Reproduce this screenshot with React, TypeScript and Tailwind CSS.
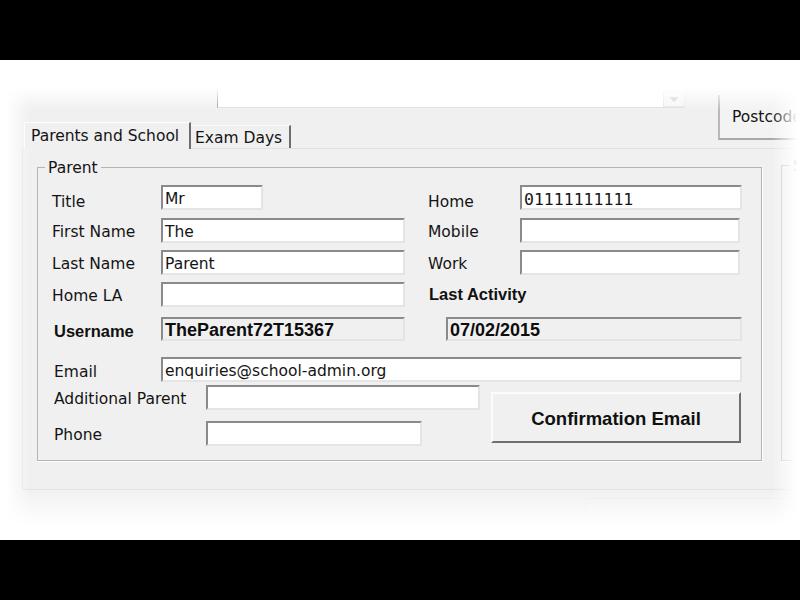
import React from 'react';
import { clsx } from 'clsx';

// winforms-ish look, blown up ~1.5x
const ui = "font-['DejaVu_Sans',sans-serif] text-[15.5px] leading-none text-[#141414] whitespace-nowrap";
const boldUi = "font-['Liberation_Sans',Arial,sans-serif] font-bold text-[16.5px] leading-none text-[#111] whitespace-nowrap";
const sunken = 'border-2 border-t-[#8a8a8a] border-l-[#8a8a8a] border-r-[#e4e4e4] border-b-[#e4e4e4]';

type FieldProps = {
  value?: string;
  width: string;
  readOnly?: boolean;
  variant?: 'plain' | 'mono' | 'bold';
  height?: string;
};

function Field({ value, width, readOnly = false, variant = 'plain', height = 'h-[25px]' }: FieldProps) {
  return (
    <div
      className={clsx(
        'flex shrink-0 items-center overflow-hidden pl-[2px]',
        sunken,
        readOnly ? 'bg-[#f0f0f0]' : 'bg-white',
        width,
        height
      )}
    >
      {value && (
        <span
          className={clsx(
            variant === 'plain' && clsx(ui, 'mt-[5px]'),
            variant === 'mono' && "mt-[5px] font-['DejaVu_Sans_Mono',monospace] text-[16.5px] leading-none text-[#161616]",
            variant === 'bold' && "mt-[2px] font-['Liberation_Sans',Arial,sans-serif] font-bold text-[18px] leading-none text-[#0d0d0d]"
          )}
        >
          {value}
        </span>
      )}
    </div>
  );
}

function Label({ children, className = '' }: { children: React.ReactNode; className?: string }) {
  return <span className={clsx(ui, 'shrink-0 pt-[4px]', className)}>{children}</span>;
}

function ParentGroup() {
  return (
    <div className="relative ml-[14px] mt-[18px] w-[725px] shrink-0 border border-[#b4b4b4] shadow-[1px_1px_0_#ffffff] pb-[14px] pl-[14px] pt-[17px]">
      <span className={clsx(ui, 'absolute -top-[7px] left-[7px] bg-[#f0f0f0] px-[3px]')}>Parent</span>

      {/* row 1 */}
      <div className="flex h-[25px] items-center">
        <div className="flex w-[376px] items-center">
          <Label className="mt-[6px] w-[109px]">Title</Label>
          <Field value="Mr" width="w-[102px]" />
        </div>
        <Label className="mt-[6px] w-[92px]">Home</Label>
        <Field value="01111111111" width="w-[222px]" variant="mono" />
      </div>

      {/* row 2 */}
      <div className="mt-[8px] flex h-[25px] items-center">
        <div className="flex w-[376px] items-center">
          <Label className="w-[109px]">First Name</Label>
          <Field value="The" width="w-[244px]" />
        </div>
        <Label className="w-[92px]">Mobile</Label>
        <Field width="w-[220px]" />
      </div>

      {/* row 3 */}
      <div className="mt-[7px] flex h-[25px] items-center">
        <div className="flex w-[376px] items-center">
          <Label className="w-[109px]">Last Name</Label>
          <Field value="Parent" width="w-[244px]" />
        </div>
        <Label className="w-[92px]">Work</Label>
        <Field width="w-[220px]" />
      </div>

      {/* row 4 */}
      <div className="mt-[7px] flex h-[25px] items-center">
        <div className="flex w-[376px] items-center">
          <Label className="w-[109px]">Home LA</Label>
          <Field width="w-[244px]" />
        </div>
        <span className={clsx(boldUi, 'ml-px')}>Last Activity</span>
      </div>

      {/* row 5 */}
      <div className="mt-[10px] flex h-[24px] items-center">
        <div className="flex w-[376px] items-center">
          <span className={clsx(boldUi, 'mt-[4px] w-[109px] pl-[2px]')}>Username</span>
          <Field value="TheParent72T15367" width="w-[244px]" height="h-[24px]" readOnly variant="bold" />
        </div>
        <div className="ml-[18px]">
          <Field value="07/02/2015" width="w-[296px]" height="h-[24px]" readOnly variant="bold" />
        </div>
      </div>

      {/* row 6 */}
      <div className="mt-[16px] flex h-[25px] items-center">
        <Label className="mt-[2px] w-[109px] pl-[2px]">Email</Label>
        <Field value="enquiries@school-admin.org" width="w-[581px]" />
      </div>

      {/* rows 7-8 + button */}
      <div className="mt-[3px] flex items-start">
        <div className="flex w-[428px] flex-col">
          <div className="flex h-[25px] items-center">
            <Label className="w-[154px] pl-[2px]">Additional Parent</Label>
            <Field width="w-[274px]" />
          </div>
          <div className="mt-[11px] flex h-[25px] items-center">
            <Label className="w-[154px] pl-[2px]">Phone</Label>
            <Field width="w-[216px]" />
          </div>
        </div>
        <button className="ml-[11px] mt-[7px] flex h-[51px] w-[250px] items-center justify-center border-2 border-t-[#fbfbfb] border-l-[#fbfbfb] border-r-[#6f6f6f] border-b-[#6f6f6f] bg-[#f0f0f0] pt-[3px]">
          <span className="font-['Liberation_Sans',Arial,sans-serif] text-[18.5px] font-bold leading-none text-[#101010]">
            Confirmation Email
          </span>
        </button>
      </div>
    </div>
  );
}

export default function App() {
  return (
    <div className="flex h-[600px] w-[800px] flex-col overflow-hidden bg-black">
      <div className="h-[60px] shrink-0" />

      <div className="relative h-[480px] shrink-0 overflow-hidden bg-[#f0f0f0]">
        {/* top strip: combo + tabs + postcode */}
        <div className="flex h-[88px]">
          <div className="flex w-[718px] shrink-0 flex-col">
            <div className="h-[50px]">
              <div className="relative ml-[217px] h-[48px] w-[468px] border-b border-l border-b-[#dedede] border-l-[#9a9a9a] bg-white">
                <div className="absolute bottom-0 right-0 flex h-[16px] w-[22px] items-center justify-center border border-[#e6e6e6] bg-[#f6f6f6]">
                  <div className="h-0 w-0 border-x-[5px] border-t-[5px] border-x-transparent border-t-[#c9c9c9]" />
                </div>
              </div>
            </div>
            <div className="flex h-[38px] items-end pl-[24px]">
              <div className="relative z-10 -mb-px flex h-[27px] w-[167px] items-center border-l border-t border-r-2 border-l-[#fdfdfd] border-t-[#fdfdfd] border-r-[#6e6e6e] bg-[#f0f0f0] pl-[6px] pt-[2px]">
                <span className={ui}>Parents and School</span>
              </div>
              <div className="flex h-[23px] w-[100px] items-center border-t border-r-2 border-t-[#fbfbfb] border-r-[#6e6e6e] bg-[#f0f0f0] pl-[4px] pt-[3px]">
                <span className={ui}>Exam Days</span>
              </div>
            </div>
          </div>
          <div className="mt-[35px] flex h-[45px] w-[110px] shrink-0 items-center border-b-2 border-l-2 border-b-[#a9a9a9] border-l-[#b9b9b9] bg-[#f3f3f3] pl-[12px] pt-[2px]">
            <span className={clsx(ui, 'text-[#333]')}>Postcode</span>
          </div>
        </div>

        {/* tab page */}
        <div className="ml-[22px] flex h-[342px] items-start gap-[19px] border-l border-t border-b border-[#e2e2e2]">
          <ParentGroup />
          <div className="relative mt-[16px] h-[296px] w-[100px] shrink-0 border border-[#c4c4c4] shadow-[1px_1px_0_#ffffff]">
            <span className={clsx(ui, 'absolute -top-[7px] left-[8px] bg-[#f0f0f0] px-[3px] text-[#9a9a9a]')}>S</span>
          </div>
        </div>

        <div className="ml-[585px] mt-[8px] h-[30px] border-l border-t border-[#e8e8e8]" />

        {/* soft white vignette round the crop */}
        <div className="pointer-events-none absolute inset-x-0 top-0 h-[50px] bg-linear-to-b from-white from-55% to-white/0" />
        <div className="pointer-events-none absolute inset-x-0 bottom-0 h-[52px] bg-linear-to-t from-white from-30% to-white/0" />
        <div className="pointer-events-none absolute inset-y-0 left-0 w-[30px] bg-linear-to-r from-white from-20% to-white/0" />
        <div className="pointer-events-none absolute inset-y-0 right-0 w-[28px] bg-linear-to-l from-white from-10% to-white/0" />
      </div>

      <div className="h-[60px] shrink-0" />
    </div>
  );
}
